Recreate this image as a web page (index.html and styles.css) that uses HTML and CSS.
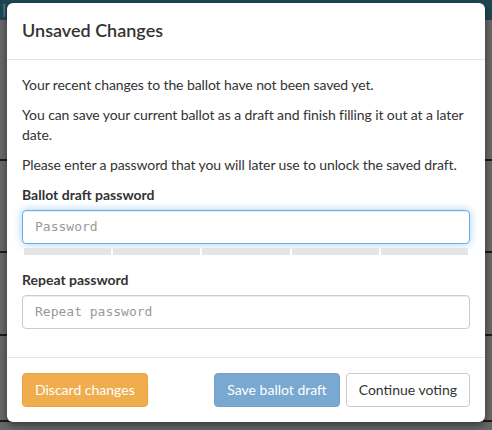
FILE: index.html
```html
<!DOCTYPE html>
<html>
<head>
<meta charset="utf-8">
<link rel="stylesheet" href="styles.css">
</head>
<body>
<div class="page">
  <div class="topbar"><span class="topbar-text">ls</span></div>
  <div class="page-body">
    <div class="rule r1"></div>
    <div class="rule r2"></div>
    <div class="rule r3"></div>
    <div class="rule r4"></div>
  </div>
</div>
<div class="modal">
  <div class="modal-header">
    <h4 class="modal-title">Unsaved Changes</h4>
  </div>
  <div class="modal-body">
    <p>Your recent changes to the ballot have not been saved yet.</p>
    <p>You can save your current ballot as a draft and finish filling it out at a later date.</p>
    <p>Please enter a password that you will later use to unlock the saved draft.</p>
    <div class="form-group">
      <label class="label">Ballot draft password</label>
      <input class="input input-focus" type="password" placeholder="Password">
      <div class="strength">
        <span class="seg"></span><span class="seg"></span><span class="seg"></span><span class="seg"></span><span class="seg"></span>
      </div>
    </div>
    <div class="form-group">
      <label class="label">Repeat password</label>
      <input class="input" type="password" placeholder="Repeat password">
    </div>
  </div>
  <div class="modal-footer">
    <button class="btn btn-warning">Discard changes</button>
    <div class="right-btns">
      <button class="btn btn-primary">Save ballot draft</button>
      <button class="btn btn-default">Continue voting</button>
    </div>
  </div>
</div>
</body>
</html>
```

FILE: styles.css
```css
* { box-sizing: border-box; }
html, body { margin: 0; padding: 0; }
body {
  width: 492px;
  height: 430px;
  overflow: hidden;
  background: #6a6a6a;
  font-family: Lato, "Open Sans", sans-serif;
  font-size: 14px;
  line-height: 1.42857;
  color: #333;
  position: relative;
}
.page { height: 430px; display: flex; flex-direction: column; }
.topbar {
  height: 20px;
  background: #1f4753;
  color: #5d7b86;
  font-size: 18px;
  padding-left: 2px;
  line-height: 20px;
}
.page-body { flex: 1; display: flex; flex-direction: column; background: #696969; }
.rule { height: 2px; background: #1a1a1a; }
.r1 { margin-top: 139px; }
.r2 { margin-top: 90px; }
.r3 { margin-top: 81px; }
.r4 { margin-top: 84px; }

.modal {
  position: absolute;
  top: 3px;
  left: 7px;
  width: 478px;
  background: #fff;
  border-radius: 6px;
  box-shadow: 0 3px 9px rgba(0,0,0,.5);
}
.modal-header {
  padding: 15px;
  border-bottom: 1px solid #e5e5e5;
}
.modal-title {
  margin: 0;
  font-size: 18px;
  font-weight: 600;
  line-height: 1.42857;
  color: #333;
}
.modal-body { padding: 15px; }
.modal-body p { margin: 0 0 10px; letter-spacing: -0.1px; }
.form-group { margin-bottom: 15px; }
.form-group:last-child { margin-bottom: 13px; }
.label {
  display: block;
  font-weight: 700;
  margin-bottom: 5px;
}
.input {
  display: block;
  width: 100%;
  height: 34px;
  padding: 6px 12px;
  font-family: "DejaVu Sans Mono", monospace;
  font-size: 13px;
  color: #555;
  background: #fff;
  border: 1px solid #ccc;
  border-radius: 4px;
  box-shadow: inset 0 1px 1px rgba(0,0,0,.075);
  outline: none;
}
.input::placeholder { color: #999; }
.input-focus {
  border-color: #66afe9;
  box-shadow: inset 0 1px 1px rgba(0,0,0,.075), 0 0 8px rgba(102,175,233,.6);
}
.strength {
  display: flex;
  gap: 2px;
  padding: 0 2px;
  margin-top: 4px;
}
.seg { flex: 1; height: 7px; background: #e5e5e5; }

.modal-footer {
  padding: 15px;
  border-top: 1px solid #e5e5e5;
  display: flex;
  justify-content: space-between;
}
.right-btns { display: flex; gap: 6px; }
.btn {
  font-family: Lato, "Open Sans", sans-serif;
  font-size: 14px;
  line-height: 1.42857;
  padding: 6px 12px;
  height: 34px;
  border: 1px solid transparent;
  border-radius: 4px;
  cursor: pointer;
}
.btn-warning { background: #f0ad4e; border-color: #eea236; color: #fff; }
.btn-primary { background: #337ab7; border-color: #2e6da4; color: #fff; opacity: .65; }
.btn-default { background: #fff; border-color: #ccc; color: #333; }
```
